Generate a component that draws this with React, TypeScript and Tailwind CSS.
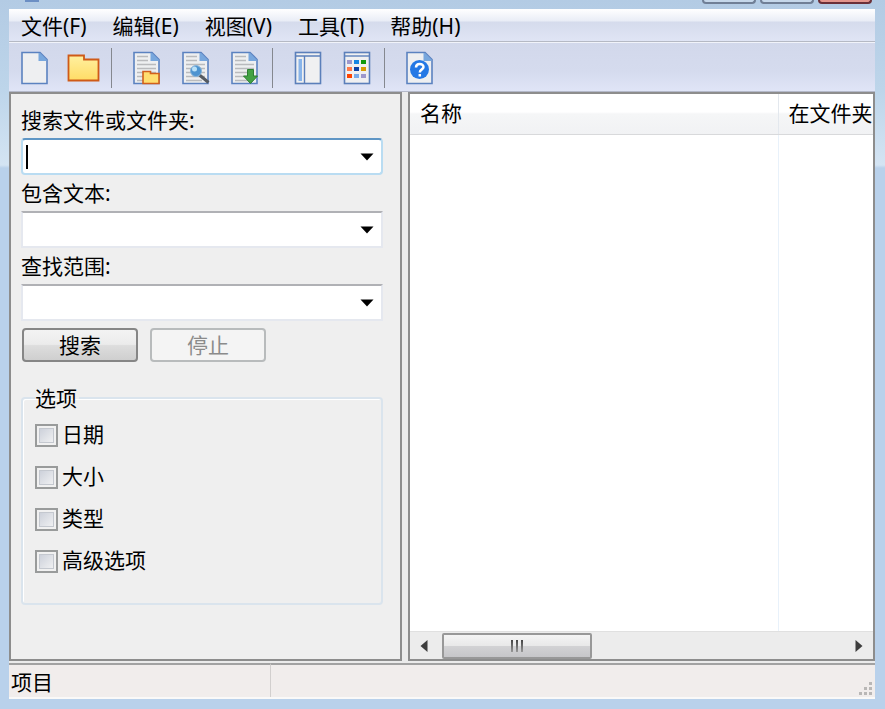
import { useState, type ReactNode } from "react";

const MENU = ["文件(F)", "编辑(E)", "视图(V)", "工具(T)", "帮助(H)"];
const OPTIONS = ["日期", "大小", "类型", "高级选项"];

function Page({ children, lines = false }: { children?: ReactNode; lines?: boolean }) {
  return (
    <svg width="30" height="34" viewBox="0 0 30 34" aria-hidden="true">
      <path d="M2 1.5H20L27 8.5V32.5H2Z" fill="#eeeff1" stroke="#5b82c0" strokeWidth="1.6" />
      <path d="M18.5 2H20L26.5 8.5V10H18.5Z" fill="#78a7dd" />
      {lines && (
        <path
          d="M5 5.5H16M5 9.5H16M5 13.5H24M5 17.5H24M5 21.5H24M5 25.5H24M5 29.5H21"
          stroke="#b9babd"
          strokeWidth="1.4"
        />
      )}
      {children}
    </svg>
  );
}

function FolderIcon() {
  return (
    <svg width="34" height="34" viewBox="0 0 34 34" aria-hidden="true">
      <defs>
        <linearGradient id="folder" x1="0" y1="0" x2="0" y2="1">
          <stop offset="0" stopColor="#fff0a0" />
          <stop offset="1" stopColor="#ffdc66" />
        </linearGradient>
      </defs>
      <path d="M1.5 4.5H17V8.5H31.5V29.5H1.5Z" fill="url(#folder)" stroke="#cf5a18" strokeWidth="1.8" />
    </svg>
  );
}

function PanelIcon() {
  return (
    <svg width="28" height="34" viewBox="0 0 28 34" aria-hidden="true">
      <rect x="1.5" y="1.5" width="25" height="31" fill="#f0f0f1" stroke="#5b7fba" strokeWidth="1.6" />
      <path d="M2 5H26M10.5 5V32" stroke="#5b7fba" strokeWidth="1.4" />
      <rect x="4.5" y="8" width="3.5" height="22" fill="#88b4ea" />
    </svg>
  );
}

function GridIcon() {
  const cells = ["#9d98cc", "#1686e4", "#10990e", "#ff7b4b", "#0e43a6", "#d69c05", "#ff4300", "#7aaae8", "#9d98cc"];
  return (
    <svg width="28" height="34" viewBox="0 0 28 34" aria-hidden="true">
      <rect x="1.5" y="1.5" width="25" height="31" fill="#f0f0f1" stroke="#5b7fba" strokeWidth="1.6" />
      <path d="M2 5H26" stroke="#5b7fba" strokeWidth="1.4" />
      {cells.map((color, i) => (
        <rect key={i} x={4 + (i % 3) * 7} y={9 + Math.floor(i / 3) * 7} width="5" height="4" fill={color} />
      ))}
    </svg>
  );
}

function ToolButton({ label, children }: { label: string; children: ReactNode }) {
  return (
    <button type="button" title={label} aria-label={label} className="flex w-[49px] items-center justify-center">
      {children}
    </button>
  );
}

function Separator() {
  return <div className="mr-2.5 ml-[3px] h-10 w-px bg-[#85888f]" />;
}

function ComboBox({ id, label, active = false }: { id: string; label: string; active?: boolean }) {
  const [value, setValue] = useState("");
  return (
    <div>
      <label htmlFor={id} className="block h-9 leading-9">
        {label}
      </label>
      <div
        className={
          active
            ? "flex h-[37px] items-center rounded-sm border-2 border-[#b9dcf2] border-t-[#5f96c5] bg-white pl-[3px]"
            : "flex h-[37px] items-center border-2 border-[#e5e8ef] border-t-[#b0b1b5] bg-white pl-[3px]"
        }
      >
        {active && !value && <span className="h-6 w-0.5 bg-black" />}
        <input
          id={id}
          value={value}
          onChange={(e) => setValue(e.target.value)}
          className="h-full min-w-0 flex-1 bg-transparent outline-none"
        />
        <button type="button" aria-label={`${label} 列表`} className="flex h-full w-7 items-center justify-center">
          <svg width="14" height="8" viewBox="0 0 14 8" aria-hidden="true">
            <path d="M0.5 0.5H13.5L7 7.5Z" fill="#000" />
          </svg>
        </button>
      </div>
    </div>
  );
}

function SearchPanel() {
  return (
    <form className="w-[393px] shrink-0 border-2 border-[#8d8d8d] bg-[#efefef] pt-2 pr-[17px] pl-2.5">
      <ComboBox id="name" label="搜索文件或文件夹:" active />
      <ComboBox id="text" label="包含文本:" />
      <ComboBox id="scope" label="查找范围:" />

      <div className="mt-[7px] flex gap-3 pl-px">
        <button
          type="button"
          className="h-[34px] w-[116px] rounded border-2 border-[#868686] bg-[linear-gradient(#f3f3f3,#ebebeb_48%,#dddddd_52%,#cfcfcf)] leading-none"
        >
          搜索
        </button>
        <button
          type="button"
          disabled
          className="h-[34px] w-[116px] rounded border-2 border-[#b8bbbc] bg-[#f4f4f4] leading-none text-[#8b8b8b]"
        >
          停止
        </button>
      </div>

      <fieldset className="mt-6 rounded border-2 border-[#dae4ed] px-3 pt-1 pb-[21px] shadow-[inset_1px_1px_0_#fff]">
        <legend className="h-6 pr-0.5 leading-6">选项</legend>
        {OPTIONS.map((option) => (
          <label key={option} className="flex h-[42px] items-center gap-1">
            <input
              type="checkbox"
              className="size-[23px] appearance-none border-2 border-[#999b9b] bg-[linear-gradient(135deg,#c5cad5,#f7f7f7)] shadow-[inset_0_0_0_2px_#f1f1f1,inset_0_0_0_3px_#c4c8cf] checked:bg-[#4a6fa8]"
            />
            {option}
          </label>
        ))}
      </fieldset>
    </form>
  );
}

function ResultsPanel() {
  return (
    <div className="flex min-w-0 flex-1 flex-col border-2 border-[#8d8d8d] bg-white">
      <div className="min-h-0 flex-1 overflow-hidden">
        <table className="h-full w-full table-fixed border-collapse text-left">
          <thead>
            <tr className="h-10 bg-[linear-gradient(#ffffff_45%,#f5f6f7_50%,#f1f2f4)]">
              <th className="w-[368px] border-r border-b border-r-[#e3e8ee] border-b-[#d8d9db] px-2.5 font-normal">名称</th>
              <th className="overflow-hidden border-b border-b-[#d8d9db] pl-2.5 font-normal whitespace-nowrap">
                在文件夹
              </th>
            </tr>
          </thead>
          <tbody>
            <tr>
              <td className="border-r border-[#e8f1fa]" />
              <td />
            </tr>
          </tbody>
        </table>
      </div>

      {/* Horizontal scrollbar */}
      <div className="flex h-7 items-center border-t border-[#e0e0e0] bg-[#ececec]">
        <button type="button" aria-label="向左滚动" className="flex h-full w-8 items-center justify-center pr-1">
          <svg width="8" height="12" viewBox="0 0 8 12" aria-hidden="true">
            <path d="M7.5 0V12L0.5 6Z" fill="#3d3d3d" />
          </svg>
        </button>
        <div className="flex flex-1">
          <div className="flex h-[26px] w-[150px] items-center justify-center gap-[3px] rounded-xs border-2 border-[#989898] bg-[linear-gradient(#f4f4f4,#e9e9e9_48%,#d2d2d4_52%,#c6c6c9)]">
            <span className="h-3 w-0.5 bg-linear-to-b from-[#444] to-[#999]" />
            <span className="h-3 w-0.5 bg-linear-to-b from-[#444] to-[#999]" />
            <span className="h-3 w-0.5 bg-linear-to-b from-[#444] to-[#999]" />
          </div>
        </div>
        <button type="button" aria-label="向右滚动" className="flex h-full w-7 items-center justify-center">
          <svg width="8" height="12" viewBox="0 0 8 12" aria-hidden="true">
            <path d="M0.5 0V12L7.5 6Z" fill="#3d3d3d" />
          </svg>
        </button>
      </div>
    </div>
  );
}

export default function App() {
  return (
    <div className="flex h-screen flex-col bg-[#b9d1eb] bg-[linear-gradient(#b3cbe4,#bdd5ea_90px,#d4e4f3_165px,#b9d1eb_168px)] pr-2.5 pb-2.5 pl-[9px] font-['Noto_Sans','Noto_Sans_CJK_SC',sans-serif] text-[21px] text-black">
      {/* Title bar */}
      <div className="flex h-[9px] shrink-0 items-start gap-1 pr-[3px] pl-4">
        <span className="h-0.5 w-3.5 bg-[#6c8fc4]" />
        <span className="flex-1" />
        <button type="button" aria-label="最小化" className="h-1 w-[54px] rounded-b border-2 border-t-0 border-[#707f96] bg-[#c5d7ea]" />
        <button type="button" aria-label="最大化" className="h-1 w-[54px] rounded-b border-2 border-t-0 border-[#707f96] bg-[#c5d7ea]" />
        <button type="button" aria-label="关闭" className="h-1 w-[54px] rounded-b border-2 border-t-0 border-[#6b3038] bg-[#e3958c]" />
      </div>

      {/* Menu */}
      <nav className="flex h-[33px] shrink-0 items-center gap-[26px] border-b border-[#b5b9c4] bg-[linear-gradient(#ffffff,#e9edf6_12px,#d5dbec_13px,#e0e5f5)] pt-0.5 pl-3">
        {MENU.map((item) => (
          <button key={item} type="button" className="leading-8 whitespace-nowrap">
            {item}
          </button>
        ))}
      </nav>

      {/* Toolbar */}
      <div className="flex h-[50px] shrink-0 items-center border-t border-b border-t-[#f1f3fa] border-b-[#b4b9ca] bg-[linear-gradient(#d2d8eb,#d5dbee_60%,#e0e5f7)] pt-0.5 pl-px">
        <ToolButton label="新建">
          <Page />
        </ToolButton>
        <ToolButton label="打开">
          <FolderIcon />
        </ToolButton>
        <Separator />
        <ToolButton label="打开所在文件夹">
          <Page lines>
            <path d="M11 20.5H18.5V22.5H27V32.5H11Z" fill="#ffdf70" stroke="#d2601c" strokeWidth="1.6" />
          </Page>
        </ToolButton>
        <ToolButton label="查看">
          <Page lines>
            <path d="M18.5 24L27.5 31.5" stroke="#555a61" strokeWidth="3" />
            <circle cx="15" cy="20" r="5.5" fill="#4d94d0" stroke="#86b3d8" />
            <circle cx="13.5" cy="18" r="2.5" fill="#b9e1f8" />
          </Page>
        </ToolButton>
        <ToolButton label="导出">
          <Page lines>
            <path d="M17.5 18.5H23.5V25H27.5L20.5 32.5L13.5 25H17.5Z" fill="#43a244" stroke="#2d7f32" />
          </Page>
        </ToolButton>
        <Separator />
        <ToolButton label="面板">
          <PanelIcon />
        </ToolButton>
        <ToolButton label="图标">
          <GridIcon />
        </ToolButton>
        <Separator />
        <ToolButton label="帮助">
          <Page>
            <circle cx="14.5" cy="18.5" r="9.5" fill="#2478e5" />
            <path
              d="M11 16.5C11 12 18.5 12 18.5 16C18.5 18.5 14.8 18.3 14.8 21.5M14.8 23V25.5"
              fill="none"
              stroke="#fff"
              strokeWidth="2.5"
            />
          </Page>
        </ToolButton>
      </div>

      <main className="flex min-h-0 flex-1 gap-1.5 bg-[#ebebeb]">
        <SearchPanel />
        <ResultsPanel />
      </main>

      {/* Status bar */}
      <footer className="flex h-[38px] shrink-0 border-t-2 border-b-2 border-t-[#ebebeb] border-b-[#faf9f8] bg-[#f1edec]">
        <div className="flex w-[262px] items-center border-t-2 border-r border-t-[#a2a2a2] border-r-[#d2cfce] pt-1 pl-0.5">
          项目
        </div>
        <div className="flex flex-1 items-end justify-end border-t-2 border-[#a2a2a2] pr-0.5">
          <svg width="16" height="16" viewBox="0 0 16 16" fill="#b9b7b6" aria-hidden="true">
            <path d="M12 1h3v3h-3zM7 6h3v3h-3zM12 6h3v3h-3zM2 11h3v3h-3zM7 11h3v3h-3zM12 11h3v3h-3z" />
          </svg>
        </div>
      </footer>
    </div>
  );
}
